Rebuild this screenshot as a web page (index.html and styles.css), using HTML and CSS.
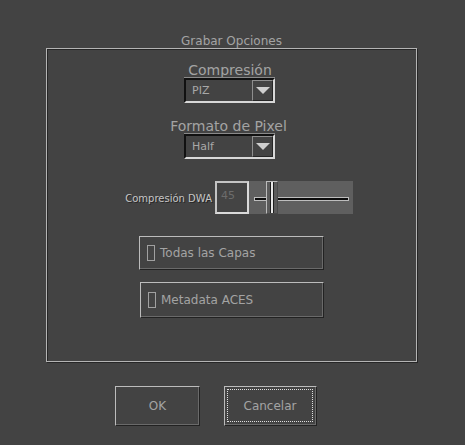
FILE: index.html
```html
<!DOCTYPE html>
<html>
<head>
<meta charset="utf-8">
<link rel="stylesheet" href="styles.css">
</head>
<body>
<div class="dialog">
  <div class="title">Grabar Opciones</div>
  <div class="group">
    <div class="label">Compresión</div>
    <div class="choice">
      <span class="choice-text">PIZ</span>
      <span class="choice-btn"><span class="tri"></span></span>
    </div>
    <div class="label label2">Formato de Pixel</div>
    <div class="choice">
      <span class="choice-text">Half</span>
      <span class="choice-btn"><span class="tri"></span></span>
    </div>
    <div class="dwa-row">
      <div class="dwa-label">Compresión DWA</div>
      <div class="dwa-input">45</div>
      <div class="slider">
        <div class="track"></div>
        <div class="thumb"><span class="thumb-line"></span></div>
      </div>
    </div>
    <div class="check check1"><span class="box"></span>Todas las Capas</div>
    <div class="check check2"><span class="box"></span>Metadata ACES</div>
  </div>
  <div class="buttons">
    <div class="btn btn-ok">OK</div>
    <div class="btn btn-cancel"><span class="focus">Cancelar</span></div>
  </div>
</div>
</body>
</html>
```
FILE: styles.css
```css
html, body {
  margin: 0;
  padding: 0;
  background: #434343;
}
body {
  width: 465px;
  height: 445px;
  overflow: hidden;
  font-family: "DejaVu Sans", sans-serif;
  color: #a3a3a3;
}
.dialog {
  padding-top: 35px;
  display: flex;
  flex-direction: column;
}
.title {
  font-size: 12px;
  line-height: 13px;
  height: 13px;
  text-align: center;
  width: 463px;
}
.group {
  margin-left: 46px;
  width: 371px;
  height: 314px;
  box-sizing: border-box;
  border: 1px solid #b4b4b4;
  box-shadow: 1px 1px 0 #262626, inset 1px 1px 0 #262626;
  display: flex;
  flex-direction: column;
  align-items: flex-start;
}
.label {
  margin-top: 14px;
  font-size: 14px;
  line-height: 15px;
  height: 15px;
  width: 369px;
  text-align: center;
  padding-right: 3px;
  box-sizing: border-box;
}
.label2 {
  margin-top: 16px;
  padding-right: 6px;
}
.choice {
  margin-left: 137px;
  width: 91px;
  height: 25px;
  box-sizing: border-box;
  border-style: solid;
  border-width: 2px;
  border-color: #111 #d8d8d8 #d8d8d8 #111;
  box-shadow: 0 -1px 0 #8a8a8a;
  display: flex;
  align-items: center;
  justify-content: space-between;
}
.choice-text {
  font-size: 11px;
  padding-left: 6px;
  color: #a8a8a8;
}
.choice-btn {
  width: 21px;
  height: 21px;
  box-sizing: border-box;
  border-style: solid;
  border-width: 1px;
  border-color: #8e8e8e #262626 #262626 #8e8e8e;
  display: flex;
  align-items: center;
  justify-content: center;
}
.tri {
  width: 0;
  height: 0;
  border-left: 7px solid transparent;
  border-right: 7px solid transparent;
  border-top: 7px solid #cfcfcf;
}
.dwa-row {
  margin-top: 22px;
  margin-left: 68px;
  display: flex;
  height: 33px;
}
.dwa-label {
  width: 100px;
  padding-right: 3px;
  box-sizing: border-box;
  text-align: right;
  font-size: 10px;
  line-height: 35px;
  color: #c6c6c6;
  text-shadow: 1px 1px 0 #262626;
  white-space: nowrap;
}
.dwa-input {
  width: 34px;
  height: 33px;
  box-sizing: border-box;
  border-style: solid;
  border-width: 2px;
  border-color: #c4c4c4 #dadada #dadada #c4c4c4;
  font-size: 11px;
  line-height: 25px;
  padding-left: 4px;
  color: #6c6c6c;
  background: #444;
}
.slider {
  position: relative;
  width: 104px;
  height: 33px;
  background: #5f5f5f;
}
.track {
  position: absolute;
  left: 5px;
  top: 16px;
  width: 95px;
  height: 4px;
  box-sizing: border-box;
  border: 1px solid #bdbdbd;
  background: #0c0c0c;
}
.thumb {
  position: absolute;
  left: 17px;
  top: 0;
  width: 12px;
  height: 33px;
  box-sizing: border-box;
  border-style: solid;
  border-width: 1px;
  border-color: #bcbcbc #4a4a4a #4a4a4a #bcbcbc;
  background: #5b5b5b;
  display: flex;
  justify-content: center;
}
.thumb-line {
  width: 2px;
  height: 31px;
  background: #e6e6e6;
  border-left: 1px solid #1e1e1e;
  border-right: 1px solid #1e1e1e;
}
.check {
  margin-left: 92px;
  width: 185px;
  box-sizing: border-box;
  border-style: solid;
  border-width: 1px;
  border-color: #bcbcbc #222 #222 #bcbcbc;
  box-shadow: inset -1px -1px 0 #6a6a6a;
  display: flex;
  align-items: center;
  font-size: 12px;
  color: #a3a3a3;
  padding-left: 7px;
}
.check1 {
  margin-top: 22px;
  height: 34px;
}
.check2 {
  margin-top: 12px;
  margin-left: 93px;
  width: 184px;
  height: 36px;
}
.box {
  width: 8px;
  height: 16px;
  box-sizing: border-box;
  border: 1px solid #a0a0a0;
  margin-right: 5px;
}
.buttons {
  margin-top: 24px;
  margin-left: 115px;
  display: flex;
  gap: 24px;
}
.btn {
  height: 40px;
  box-sizing: border-box;
  border-style: solid;
  border-width: 1px;
  border-color: #bcbcbc #222 #222 #bcbcbc;
  box-shadow: inset -1px -1px 0 #6a6a6a;
  font-size: 12px;
  display: flex;
  align-items: center;
  justify-content: center;
  color: #a3a3a3;
}
.btn-ok {
  width: 85px;
}
.btn-cancel {
  width: 93px;
  padding: 2px 3px 3px 2px;
}
.focus {
  flex: 1;
  align-self: stretch;
  display: flex;
  align-items: center;
  justify-content: center;
  border: 1px dotted #e0e0e0;
}
```
